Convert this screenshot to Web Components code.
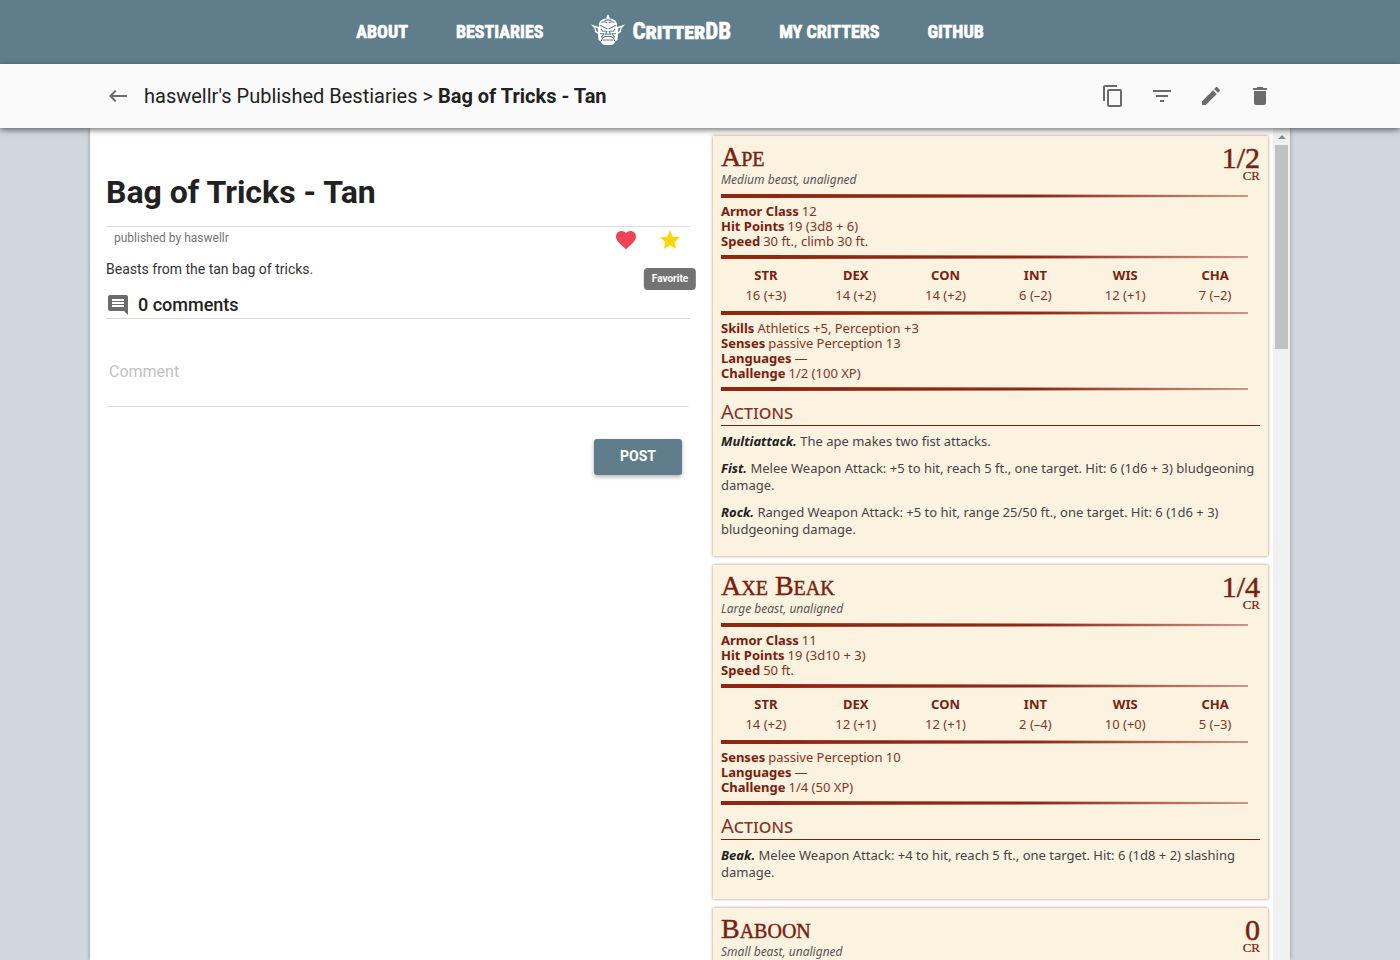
<!DOCTYPE html>
<html lang="en">
<head>
<meta charset="utf-8">
<meta name="viewport" content="width=device-width, initial-scale=1">
<title>Bag of Tricks - Tan | CritterDB</title>
<style>
  html, body { height: 100%; }
  body { margin: 0; font-family: Roboto, sans-serif; color: #212121; background: #cfd8df; }
</style>
</head>
<body>
<critter-app></critter-app>

<script>
const define = (name, html, setup) => {
  const template = document.createElement('template');
  template.innerHTML = html;
  customElements.define(name, class extends HTMLElement {
    constructor() {
      super();
      this.attachShadow({ mode: 'open' }).append(template.content.cloneNode(true));
    }
    connectedCallback() {
      if (setup && !this.ready) { this.ready = true; setup(this, this.shadowRoot); }
    }
  });
};

const ICONS = {
  back: 'M21 11H6.830l3.580-3.590L9 6l-6 6 6 6 1.410-1.410L6.830 13H21z',
  copy: 'M16 1H4c-1.100 0-2 .9-2 2v14h2V3h12V1zm3 4H8c-1.100 0-2 .9-2 2v14c0 1.100.9 2 2 2h11c1.100 0 2-.9 2-2V7c0-1.100-.9-2-2-2zm0 16H8V7h11v14z',
  filter: 'M10 18h4v-2h-4v2zM3 6v2h18V6H3zm3 7h12v-2H6v2z',
  edit: 'M3 17.250V21h3.750L17.810 9.940l-3.750-3.750L3 17.250zM20.710 7.040c.39-.39.39-1.020 0-1.410l-2.340-2.340c-.39-.39-1.020-.39-1.410 0l-1.830 1.830 3.750 3.750 1.830-1.830z',
  trash: 'M6 19c0 1.100.9 2 2 2h8c1.100 0 2-.9 2-2V7H6v12zM19 4h-3.500l-1-1h-5l-1 1H5v2h14V4z',
  heart: 'M12 21.350l-1.450-1.320C5.400 15.360 2 12.280 2 8.500 2 5.420 4.420 3 7.500 3c1.740 0 3.410.81 4.500 2.090C13.090 3.810 14.760 3 16.500 3 19.580 3 22 5.420 22 8.500c0 3.780-3.400 6.860-8.550 11.540L12 21.350z',
  star: 'M12 17.270L18.180 21l-1.640-7.030L22 9.240l-7.190-.61L12 2 9.190 8.630 2 9.240l5.460 4.730L5.820 21z',
  comment: 'M21.990 4c0-1.100-.89-2-1.990-2H4c-1.100 0-2 .9-2 2v12c0 1.100.9 2 2 2h14l4 4-.01-18zM18 14H6v-2h12v2zm0-3H6V9h12v2zm0-3H6V6h12v2z'
};

define('ui-icon', `
  <style>
    :host { display: block; width: 24px; height: 24px; }
    svg { display: block; width: 100%; height: 100%; fill: currentColor; }
  </style>
  <svg viewBox="0 0 24 24" aria-hidden="true"><path/></svg>`,
  (host, root) => root.querySelector('path').setAttribute('d', ICONS[host.getAttribute('name')]));

define('icon-button', `
  <style>
    :host { display: block; color: #6b6b6b; }
    button { display: grid; place-items: center; width: 40px; height: 40px; padding: 0; border: 0;
      background: none; color: inherit; cursor: pointer; }
  </style>
  <button type="button"><slot></slot></button>`,
  (host, root) => root.querySelector('button').setAttribute('aria-label', host.getAttribute('label')));

define('site-nav', `
  <style>
    :host { display: block; background: #607d8b; padding-right: 60px; }
    nav { display: flex; justify-content: center; align-items: center; gap: 48px; height: 64px;
      font: 700 18px/24px "Liberation Sans Narrow", "Roboto Condensed", Roboto, sans-serif;
      -webkit-text-stroke: 0.6px; }
    a { color: #fff; text-decoration: none; white-space: nowrap; }
    .brand { display: flex; align-items: center; gap: 7px; font-size: 23px; font-variant: small-caps; }
    svg { display: block; width: 34px; height: 32px; margin-bottom: 4px; }
  </style>
  <nav aria-label="Main">
    <a href="#about">ABOUT</a>
    <a href="#bestiaries">BESTIARIES</a>
    <a class="brand" href="#home">
      <svg viewBox="0 0 34 32" aria-hidden="true">
        <path fill="#fff" d="M15.500 4.500C15.300 3 16 1.500 17 0.500c1 1 1.700 2.500 1.500 4 4.500.3 7.500 2.500 7.500 6.500v9l1 1-.5 5-2.500 1.500-1 2.500-3 1h-6l-3-1-1-2.500L7.500 26 7 21l1-1v-9c0-4 3-6.200 7.500-6.500z"/>
        <path fill="#fff" fill-rule="evenodd" d="M8 13L0 10.500l3.500 4L4 18l3 2 1 2zM6.800 14.500l-3.300-1.200 1.500 1.700.3 2 1.700 1.200zM26 13l8-2.500-3.500 4L30 18l-3 2-1 2zM27.200 14.500l3.300-1.200-1.500 1.700-.3 2-1.700 1.200z"/>
        <path fill="none" stroke="#607d8b" stroke-width="1.100" stroke-linecap="round" d="M11 8.500c2-1.200 4-.6 5 .2M23 8.500c-2-1.200-4-.6-5 .2M14 6.500c2-.8 4-.8 6 0M9.500 11.500l6.500 3.300M24.500 11.500L18 14.800M10 15l1.500 2 3.500.3M24 15l-1.500 2-3.500.3M15.800 17.500l-1.300 2.700h5l-1.300-2.700M9.500 19.500l3.500.5-2.500 3M24.500 19.500l-3.500.5 2.500 3M10.500 26.500l1-2.500 2.500-1.500h6l2.500 1.500 1 2.500M12.500 26h9"/>
      </svg>
      <span>CritterDB</span>
    </a>
    <a href="#mine">MY CRITTERS</a>
    <a href="#github">GITHUB</a>
  </nav>`);

define('page-toolbar', `
  <style>
    :host { display: block; position: relative; z-index: 1; background: #fafafa; padding-right: 20px;
      box-shadow: 0 2px 6px rgba(0, 0, 0, .55); }
    .bar { display: flex; align-items: center; box-sizing: border-box; max-width: 1200px; height: 64px;
      margin: 0 auto; padding: 0 10px 0 8px; }
    .crumbs { flex: 1; margin: 0 0 0 6px; font-size: 20px; line-height: 24px; font-weight: 400; }
    b { font-weight: 700; }
    a { color: inherit; text-decoration: none; }
    .actions { display: flex; gap: 9px; }
  </style>
  <div class="bar">
    <icon-button label="Back"><ui-icon name="back"></ui-icon></icon-button>
    <div class="crumbs"><a href="#published">haswellr's Published Bestiaries</a> &gt; <b>Bag of Tricks - Tan</b></div>
    <div class="actions">
      <icon-button label="Copy"><ui-icon name="copy"></ui-icon></icon-button>
      <icon-button label="Filter"><ui-icon name="filter"></ui-icon></icon-button>
      <icon-button label="Edit"><ui-icon name="edit"></ui-icon></icon-button>
      <icon-button label="Delete"><ui-icon name="trash"></ui-icon></icon-button>
    </div>
  </div>`);

define('bestiary-details', `
  <style>
    :host { display: block; padding: 40px 0 0 16px; box-sizing: border-box; }
    h1 { margin: 0; padding: 4px 0 14px; font-size: 32px; line-height: 40px; font-weight: 700;
      border-bottom: 1px solid #dcdcdc; }
    .meta { display: flex; align-items: center; height: 26px; padding-left: 8px; }
    .by { flex: 1; font-size: 12px; line-height: 22px; height: 26px; color: #757575; }
    .votes { display: flex; gap: 4px; }
    .favorite { position: relative; }
    .heart { color: #ee4454; }
    .star { color: #ffd600; }
    .tip { position: absolute; top: 48px; left: 50%; transform: translateX(-50%); padding: 0 8px;
      border-radius: 4px; background: #737373; color: #fff; font-size: 10px; line-height: 22px; font-weight: 700; }
    .about { margin: 6px 0 0; font-size: 14px; line-height: 20px; color: #333; }
    h2 { display: flex; align-items: center; gap: 8px; margin: 13px 0 0; font-size: 18px; line-height: 26px;
      font-weight: 500; border-bottom: 1px solid #dcdcdc; }
    h2 ui-icon { color: #6b6b6b; }
    form { display: flex; flex-direction: column; align-items: flex-end; padding: 40px 1px 0; }
    textarea { display: block; box-sizing: border-box; width: 100%; height: 48px; padding: 2px; border: 0;
      border-bottom: 1px solid #dcdcdc; resize: none; overflow: hidden; background: none;
      font: 16px/22px Roboto, sans-serif; color: inherit; }
    textarea::placeholder { color: #c2c2c2; }
    .post { margin: 32px 7px 0; width: 88px; height: 36px; padding: 0 0 2px; border: 0; border-radius: 3px;
      background: #607d8b; color: #fff; font: 700 14px/34px Roboto, sans-serif;
      box-shadow: 0 2px 4px rgba(0, 0, 0, .3); cursor: pointer; }
  </style>
  <h1>Bag of Tricks - Tan</h1>
  <div class="meta">
    <div class="by">published by haswellr</div>
    <div class="votes">
      <icon-button class="heart" label="Like"><ui-icon name="heart"></ui-icon></icon-button>
      <div class="favorite">
        <icon-button class="star" label="Favorite"><ui-icon name="star"></ui-icon></icon-button>
        <span class="tip" role="tooltip">Favorite</span>
      </div>
    </div>
  </div>
  <p class="about">Beasts from the tan bag of tricks.</p>
  <h2><ui-icon name="comment"></ui-icon>0 comments</h2>
  <form>
    <textarea aria-label="Comment" placeholder="Comment"></textarea>
    <button class="post" type="button">POST</button>
  </form>`);

define('taper-rule', `
  <style>
    :host { display: block; height: 4px; margin: 6px 12px 6px 0;
      background: linear-gradient(to right, #922610 0, #8a2a18 60%, rgba(146, 38, 16, .45) 100%);
      clip-path: polygon(0 0, 100% 25%, 100% 75%, 0 100%); }
  </style>`);

define('stat-block', `
  <style>
    :host { display: block; padding: 8px; background: #fcf2e0; color: #7a200d;
      box-shadow: 0 0 3px rgba(110, 60, 20, .6); font: 13px/15px "Noto Sans", sans-serif; }
    header { display: flex; justify-content: space-between; height: 44px; }
    h2 { margin: 0; font: 400 28px/26px "Liberation Serif", serif; font-variant: small-caps;
      -webkit-text-stroke: 0.4px; }
    .kind { margin: 0; font-size: 12px; line-height: 20px; font-style: italic; color: #555; }
    .cr { font: 30px/28px "Liberation Serif", serif; text-align: right; -webkit-text-stroke: 0.5px; }
    .cr small { display: block; font-size: 13px; line-height: 8px; -webkit-text-stroke: 0.2px; }
    dl { margin: 0; }
    dl div { display: flex; gap: 3px; }
    dt { font-weight: 700; }
    dd { margin: 0; }
    dd, td, h3 { color: #86321f; }
    table { width: 100%; table-layout: fixed; border-collapse: collapse; line-height: 20px; text-align: center; }
    th, td { padding: 0; }
    h3 { margin: 0 0 7px; padding-top: 2px; font-size: 20px; line-height: 26px; font-weight: 400;
      font-variant: small-caps; border-bottom: 1px solid #7a200d; }
    .acts p { margin: 0 0 10px; line-height: 17px; color: #444; }
    .acts b { font-style: italic; color: #222; }
  </style>
  <header>
    <div><h2></h2><p class="kind"></p></div>
    <div class="cr"><span></span><small>CR</small></div>
  </header>
  <taper-rule></taper-rule>
  <dl class="base"></dl>
  <taper-rule></taper-rule>
  <table><thead><tr></tr></thead><tbody><tr></tr></tbody></table>
  <taper-rule></taper-rule>
  <dl class="more"></dl>
  <taper-rule></taper-rule>
  <h3>Actions</h3>
  <div class="acts"></div>`,
  (host, root) => {
    const c = host.critter, $ = s => root.querySelector(s);
    const list = rows => rows.map(([k, v]) => `<div><dt>${k}</dt><dd>${v}</dd></div>`).join('');
    $('h2').textContent = c.name;
    $('.kind').textContent = c.kind;
    $('.cr span').textContent = c.cr;
    $('.base').innerHTML = list(c.base);
    $('.more').innerHTML = list(c.more);
    $('thead tr').innerHTML = ['STR', 'DEX', 'CON', 'INT', 'WIS', 'CHA'].map(a => `<th scope="col">${a}</th>`).join('');
    $('tbody tr').innerHTML = c.scores.map(s => `<td>${s}</td>`).join('');
    $('.acts').innerHTML = c.actions.map(([k, v]) => `<p><b>${k}.</b> ${v}</p>`).join('');
  });

const CRITTERS = [
  { name: 'Ape', kind: 'Medium beast, unaligned', cr: '1/2',
    base: [['Armor Class', '12'], ['Hit Points', '19 (3d8 + 6)'], ['Speed', '30 ft., climb 30 ft.']],
    scores: ['16 (+3)', '14 (+2)', '14 (+2)', '6 (–2)', '12 (+1)', '7 (–2)'],
    more: [['Skills', 'Athletics +5, Perception +3'], ['Senses', 'passive Perception 13'], ['Languages', '—'], ['Challenge', '1/2 (100 XP)']],
    actions: [['Multiattack', 'The ape makes two fist attacks.'],
      ['Fist', 'Melee Weapon Attack: +5 to hit, reach 5 ft., one target. Hit: 6 (1d6 + 3) bludgeoning damage.'],
      ['Rock', 'Ranged Weapon Attack: +5 to hit, range 25/50 ft., one target. Hit: 6 (1d6 + 3) bludgeoning damage.']] },
  { name: 'Axe Beak', kind: 'Large beast, unaligned', cr: '1/4',
    base: [['Armor Class', '11'], ['Hit Points', '19 (3d10 + 3)'], ['Speed', '50 ft.']],
    scores: ['14 (+2)', '12 (+1)', '12 (+1)', '2 (–4)', '10 (+0)', '5 (–3)'],
    more: [['Senses', 'passive Perception 10'], ['Languages', '—'], ['Challenge', '1/4 (50 XP)']],
    actions: [['Beak', 'Melee Weapon Attack: +4 to hit, reach 5 ft., one target. Hit: 6 (1d8 + 2) slashing damage.']] },
  { name: 'Baboon', kind: 'Small beast, unaligned', cr: '0',
    base: [['Armor Class', '12'], ['Hit Points', '3 (1d6)'], ['Speed', '30 ft., climb 30 ft.']],
    scores: ['8 (–1)', '14 (+2)', '11 (+0)', '4 (–3)', '12 (+1)', '6 (–2)'],
    more: [['Senses', 'passive Perception 11'], ['Languages', '—'], ['Challenge', '0 (10 XP)']],
    actions: [['Bite', 'Melee Weapon Attack: +1 to hit, reach 5 ft., one target. Hit: 1 (1d4 – 1) piercing damage.']] }
];

define('critter-list', `
  <style>
    :host { display: grid; grid-template-columns: 1fr 17px; min-height: 0; overflow: hidden; }
    .cards { display: flex; flex-direction: column; gap: 9px; padding: 8px 5px 8px 8px; min-height: 0; overflow: hidden; }
    .cards > * { flex: none; }
    .track { display: flex; flex-direction: column; align-items: center; background: #f1f1f1; }
    .arrow { display: grid; place-items: center; height: 17px; }
    .arrow::before { content: ""; border: 4px solid transparent; border-top: 0; border-bottom-color: #8a8a8a; }
    .thumb { width: 13px; height: 204px; background: #c1c1c1; }
  </style>
  <div class="cards"></div>
  <div class="track" aria-hidden="true"><div class="arrow"></div><div class="thumb"></div></div>`,
  (host, root) => {
    for (const critter of CRITTERS) {
      const block = document.createElement('stat-block');
      block.critter = critter;
      root.querySelector('.cards').append(block);
    }
  });

define('critter-app', `
  <style>
    :host { display: grid; grid-template-rows: auto auto minmax(0, 1fr); height: 100vh; overflow: hidden; }
    .page { display: flex; min-height: 0; padding-right: 20px; }
    main { flex: 1; display: grid; grid-template-columns: 1fr 585px; grid-template-rows: minmax(0, 1fr); gap: 15px;
      max-width: 1200px; margin: 0 auto; background: #fff; box-shadow: 0 0 4px rgba(0, 0, 0, .35); }
  </style>
  <site-nav></site-nav>
  <page-toolbar></page-toolbar>
  <div class="page">
    <main>
      <bestiary-details></bestiary-details>
      <critter-list></critter-list>
    </main>
  </div>`);
</script>
</body>
</html>
